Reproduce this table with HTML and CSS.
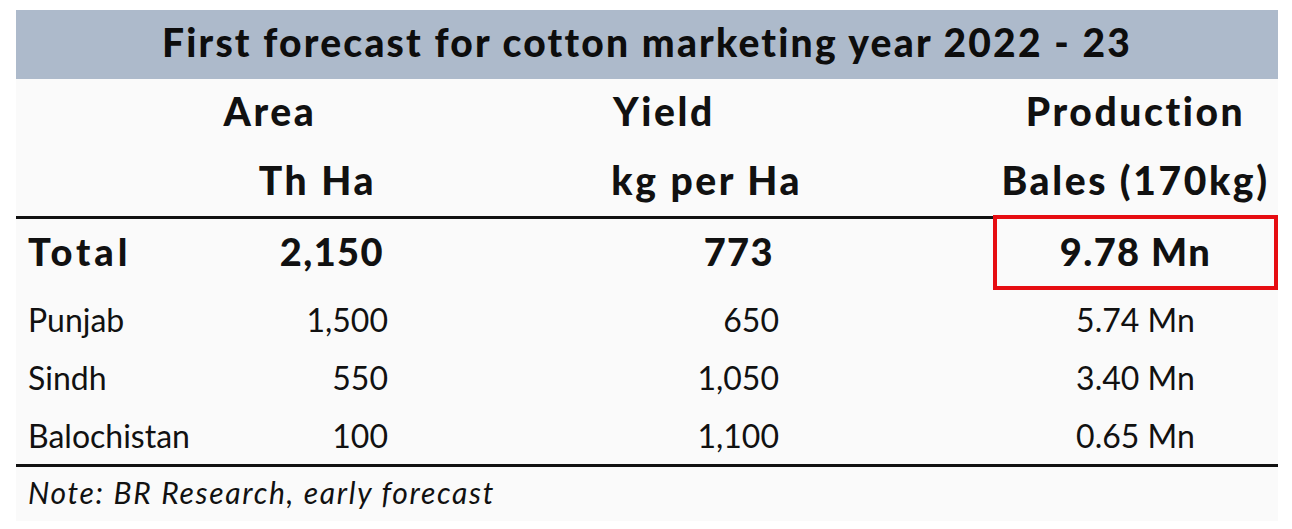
FILE: index.html
```html
<!DOCTYPE html>
<html lang="en">
<head>
  <meta charset="UTF-8" />
  <meta name="viewport" content="width=device-width, initial-scale=1" />
  <title>Cotton forecast 2022 - 23</title>
  <link rel="stylesheet" href="styles.css">
</head>
<body>

  <div class="panel">
    <h1 class="title">First forecast for cotton marketing year 2022 - 23</h1>

    <div class="grid head">
      <div class="cell"></div>
      <div class="cell h-area1">Area</div>
      <div class="cell h-yield1">Yield</div>
      <div class="cell"></div>
      <div class="cell h-prod">Production</div>

      <div class="cell"></div>
      <div class="cell h-area2">Th Ha</div>
      <div class="cell h-yield2">kg per Ha</div>
      <div class="cell"></div>
      <div class="cell h-prod">Bales (170kg)</div>
    </div>

    <div class="grid body">
      <div class="cell label total t-label">Total</div>
      <div class="cell num area total">2,150</div>
      <div class="cell num yield total t-yield">773</div>
      <div class="cell"></div>
      <div class="cell prod total highlight">9.78 Mn</div>

      <div class="cell label">Punjab</div>
      <div class="cell num area">1,500</div>
      <div class="cell num yield">650</div>
      <div class="cell"></div>
      <div class="cell prod">5.74 Mn</div>

      <div class="cell label">Sindh</div>
      <div class="cell num area">550</div>
      <div class="cell num yield">1,050</div>
      <div class="cell"></div>
      <div class="cell prod">3.40 Mn</div>

      <div class="cell label">Balochistan</div>
      <div class="cell num area">100</div>
      <div class="cell num yield">1,100</div>
      <div class="cell"></div>
      <div class="cell prod">0.65 Mn</div>
    </div>

    <div class="note">Note: BR Research, early forecast</div>
  </div>

</body>
</html>
```

FILE: styles.css
```css
* {
  margin: 0;
  padding: 0;
  box-sizing: border-box;
}

html, body {
  width: 100%;
  height: 100%;
  background: #ffffff;
  font-family: Lato, "Open Sans", sans-serif;
  color: #111;
}

body {
  padding: 10px 14px 0 16px;
}

.panel {
  width: 1262px;
  background: #fafafa;
  padding-bottom: 4px;
}

.title {
  height: 69px;
  background: #adbacb;
  font-size: 39px;
  font-weight: 900;
  letter-spacing: 2.2px;
  text-align: center;
  line-height: 64px;
  color: #0d0d0d;
}

.grid {
  display: grid;
  grid-template-columns: 192px 184px 412px 189px 285px;
}

.head {
  grid-auto-rows: 66px 71px;
  border-bottom: 3px solid #111;
  font-size: 39px;
  font-weight: 900;
  letter-spacing: 2.6px;
}

.head .cell {
  display: flex;
  align-items: center;
  padding-bottom: 2px;
}

.h-area1 {
  justify-content: center;
  padding-right: 60px;
}

.h-area2 {
  justify-content: flex-end;
  padding-right: 16px;
}

.h-yield1 {
  justify-content: flex-end;
  padding-right: 89px;
}

.h-yield2 {
  justify-content: flex-end;
  padding-right: 2px;
}

.h-prod {
  justify-content: center;
}

.body {
  grid-template-rows: 71px 58px 58px 58px;
  border-bottom: 3px solid #111;
  font-size: 32px;
}

.body .cell {
  display: flex;
  align-items: center;
}

.label {
  padding-left: 12px;
}

.num {
  justify-content: flex-end;
}

.area {
  padding-right: 4px;
}

.yield {
  padding-right: 25px;
}

.prod {
  justify-content: center;
}

.body .total {
  font-size: 38px;
  font-weight: 900;
  letter-spacing: 1.4px;
  padding-bottom: 8px;
}

.body .t-label {
  letter-spacing: 4px;
}

.area.total {
  padding-right: 8px;
}

.t-yield {
  padding-right: 30px;
}

.body .highlight {
  border: 4px solid #e60d12;
  margin-top: -4px;
  padding-bottom: 4px;
}

.note {
  height: 50px;
  padding-left: 12px;
  display: flex;
  align-items: center;
  font-size: 30px;
  font-style: italic;
  letter-spacing: 1.7px;
}
```
